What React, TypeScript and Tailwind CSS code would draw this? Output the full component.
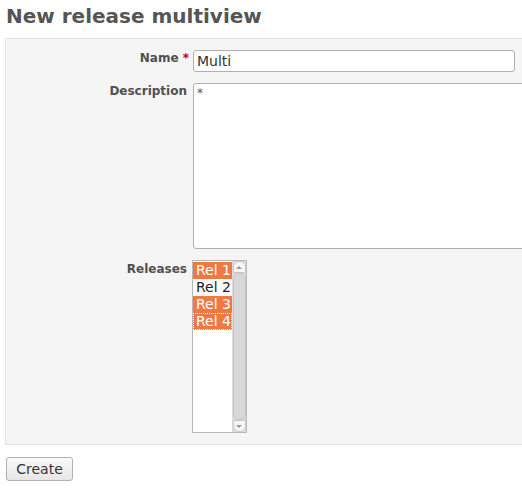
import React from 'react';

const releases = [
  { name: 'Rel 1', selected: true },
  { name: 'Rel 2', selected: false },
  { name: 'Rel 3', selected: true },
  { name: 'Rel 4', selected: true, focused: true },
];

const App: React.FC = () => {
  return (
    <div className="w-[522px] h-[491px] overflow-hidden bg-white font-['DejaVu_Sans',sans-serif] text-[#484848]">
      <h2 className="pl-[6px] pt-[3px] h-[38px] text-[20px] font-bold text-[#555] leading-[26px]">New release multiview</h2>

      <div className="ml-[5px] w-[540px] border border-[#e4e4e4] bg-[#f5f5f5] pt-[11px] pb-[11px] flex flex-col gap-[11px]">
        {/* Name */}
        <div className="flex">
          <label className="w-[187px] pr-[4px] text-right text-[12px] font-bold text-[#505050] leading-[16px] pt-[0px]">
            Name <span className="text-[#bb0000]">*</span>
          </label>
          <input
            className="w-[322px] h-[22px] rounded-[3px] border border-[#b0b0b0] bg-white px-[3px] text-[14px] text-[#333] outline-none"
            defaultValue="Multi"
          />
        </div>

        {/* Description */}
        <div className="flex">
          <label className="w-[187px] pr-[6px] text-right text-[12px] font-bold text-[#505050] leading-[16px] pt-[0px]">
            Description
          </label>
          <div className="w-[340px] h-[166px] rounded-[3px] border border-[#b0b0b0] bg-white px-[3px] pt-[2px] text-[12px] text-[#555] leading-[14px]">
            *
          </div>
        </div>

        {/* Releases */}
        <div className="flex">
          <label className="w-[187px] pr-[6px] text-right text-[12px] font-bold text-[#505050] leading-[16px] pt-[1px]">
            Releases
          </label>
          <div className="-ml-[1px] w-[55px] h-[173px] border border-[#b8b8b8] bg-white flex">
            <div className="flex-1 pt-[1px] flex flex-col">
              {releases.map((r) => (
                <div
                  key={r.name}
                  className={`h-[17px] pl-[3px] text-[14px] leading-[17px] ${
                    r.selected ? 'bg-[#f07844] text-white' : 'text-[#222]'
                  } ${r.focused ? 'outline outline-1 outline-dotted outline-white -outline-offset-1' : ''}`}
                >
                  {r.name}
                </div>
              ))}
            </div>
            <div className="w-[14px] bg-[#dcdcdc] flex flex-col items-center">
              <div className="w-[13px] h-[12px] rounded-t-[6px] bg-[#f7f7f7] border border-[#c8c8c8] flex items-center justify-center">
                <div className="w-0 h-0 border-l-[3px] border-r-[3px] border-b-[3px] border-l-transparent border-r-transparent border-b-[#999]" />
              </div>
              <div className="w-[13px] flex-1 rounded-[6px] bg-[#d8d8d8] border border-[#c4c4c4]" />
              <div className="w-[13px] h-[12px] rounded-b-[6px] bg-[#f7f7f7] border border-[#c8c8c8] flex items-center justify-center">
                <div className="w-0 h-0 border-l-[3px] border-r-[3px] border-t-[3px] border-l-transparent border-r-transparent border-t-[#999]" />
              </div>
            </div>
          </div>
        </div>
      </div>

      <div className="pl-[6px] pt-[12px]">
        <button className="w-[67px] h-[24px] rounded-[3px] border border-[#b0b0b0] bg-gradient-to-b from-[#fafafa] to-[#e6e6e6] text-[14px] text-[#333] leading-[20px]">
          Create
        </button>
      </div>
    </div>
  );
};

export default App;
